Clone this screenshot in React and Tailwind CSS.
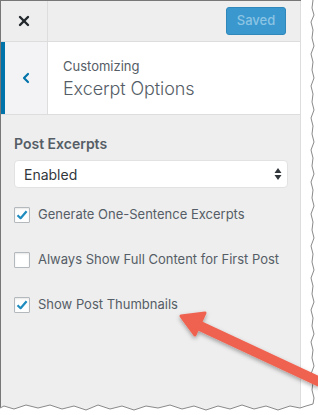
import { X, ChevronLeft } from 'lucide-react';

const checks = [
  { label: 'Generate One-Sentence Excerpts', checked: true },
  { label: 'Always Show Full Content for First Post', checked: false },
  { label: 'Show Post Thumbnails', checked: true },
];

// jagged "torn paper" edge along right and bottom
const tornRight = [
  [313, 0], [312, 8], [314, 15], [311, 22], [313, 30], [312, 38], [314, 46], [311, 54], [313, 62],
  [312, 70], [314, 78], [311, 86], [313, 94], [312, 102], [314, 110], [311, 118], [313, 126],
  [312, 134], [314, 142], [311, 150], [313, 158], [312, 166], [314, 174], [311, 182], [313, 190],
  [312, 198], [314, 206], [311, 214], [313, 222], [312, 230], [314, 238], [311, 246], [313, 254],
  [312, 262], [314, 270], [311, 278], [313, 286], [312, 294], [314, 302], [311, 310], [313, 318],
  [312, 326], [314, 334], [311, 342], [313, 350], [312, 358], [314, 366], [311, 374], [313, 382],
  [312, 390], [314, 398], [313, 404],
];
const tornBottom = [
  [313, 404], [306, 406], [300, 408], [290, 406], [278, 410], [266, 406], [254, 409], [242, 405], [230, 409],
  [218, 406], [206, 410], [194, 406], [182, 409], [170, 405], [158, 408], [146, 406], [134, 410],
  [122, 406], [110, 409], [98, 405], [86, 410], [74, 406], [62, 409], [50, 405], [38, 408], [26, 405],
  [14, 409], [4, 406], [0, 408],
];

const Checkbox = ({ checked }) => (
  <span className="w-4 h-4 shrink-0 bg-white border border-[#b4b9be] rounded-[1px] shadow-[inset_0_1px_2px_rgba(0,0,0,0.1)] flex items-center justify-center">
    {checked && (
      <svg width="12" height="12" viewBox="0 0 12 12">
        <path d="M1.5 6.2 L4.6 9.2 L10.6 2.2" fill="none" stroke="#1e8cbe" strokeWidth="2.2" strokeLinejoin="round" />
      </svg>
    )}
  </span>
);

export default function App() {
  const outline = [...tornRight, ...tornBottom].map((p) => p.join(',')).join(' ');
  const mask = `M318,0 L${tornRight.map((p) => p.join(',')).join(' L')} L${tornBottom.slice(1).map((p) => p.join(',')).join(' L')} L0,415 L318,415 Z`;

  return (
    <div className="relative w-[318px] h-[415px] overflow-hidden bg-white font-['Inter',sans-serif] text-[#555d66]">
      <div className="w-[301px] h-full border-l border-t border-[#777] flex flex-col bg-[#eee]">
        {/* header */}
        <div className="h-[41px] flex items-center border-b border-r border-[#ddd] bg-[#eee]">
          <div className="w-[47px] h-full flex items-center justify-center border-r border-[#ddd] text-[#23282d]">
            <X size={16} strokeWidth={3.6} />
          </div>
          <div className="ml-auto mr-[14px] h-[28px] w-[60px] rounded-[3px] bg-[#3a98cf] border border-[#2f87ba] flex items-center justify-center text-[13px] font-medium text-[#8cc4e3]">
            Saved
          </div>
        </div>

        {/* title */}
        <div className="h-[73px] flex border-b border-r border-[#ddd] bg-white">
          <div className="w-[47px] h-full flex items-center justify-center bg-[#f3f3f5] border-l-4 border-[#0073aa] border-r border-r-[#ddd] text-[#0073aa]">
            <ChevronLeft size={16} strokeWidth={3.2} className="ml-[-1px]" />
          </div>
          <div className="pl-[15px] pt-[15px] flex flex-col">
            <span className="text-[13px] leading-[18px] text-[#555d66]">Customizing</span>
            <span className="text-[18px] leading-[28px] font-light tracking-[-0.1px] text-[#555d66]">Excerpt Options</span>
          </div>
        </div>

        {/* content */}
        <div className="flex-1 border-r border-[#ddd] px-[13px] pt-[19px]">
          <div className="text-[14px] leading-[20px] font-semibold text-[#555d66]">Post Excerpts</div>
          <div className="mt-[6px] w-[274px] h-[28px] bg-white border border-[#e2e2e2] rounded-[4px] flex items-center pl-[9px] pr-[5px] text-[14px] text-[#32373c]">
            <span className="flex-1">Enabled</span>
            <svg width="8" height="14" viewBox="0 0 8 14">
              <path d="M4 1 L7.5 6 L0.5 6 Z M4 13 L7.5 8 L0.5 8 Z" fill="#32373c" />
            </svg>
          </div>
          <div className="mt-[19px] flex flex-col gap-[29px]">
            {checks.map((c) => (
              <div key={c.label} className="flex items-center gap-[8px] h-[16px]">
                <Checkbox checked={c.checked} />
                <span className="text-[13px] text-[#555d66] whitespace-nowrap">{c.label}</span>
              </div>
            ))}
          </div>
        </div>
      </div>

      {/* torn edge */}
      <svg className="absolute inset-0" width="318" height="415" viewBox="0 0 318 415">
        <path d={mask} fill="#fff" />
        <polyline points={outline} fill="none" stroke="#8a8a8a" strokeWidth="1" />
      </svg>

      {/* callout arrow */}
      <svg className="absolute inset-0" width="318" height="415" viewBox="0 0 318 415">
        <defs>
          <filter id="sh" x="-20%" y="-20%" width="140%" height="140%">
            <feDropShadow dx="0" dy="2" stdDeviation="2" floodColor="#000" floodOpacity="0.35" />
          </filter>
        </defs>
        <g filter="url(#sh)">
          <line x1="320" y1="382" x2="200" y2="326" stroke="#ef6250" strokeWidth="10" />
          <path d="M181 316 L205 313 L195 335 Z" fill="#ef6250" stroke="#ef6250" strokeWidth="3" strokeLinejoin="round" />
        </g>
      </svg>
    </div>
  );
}
